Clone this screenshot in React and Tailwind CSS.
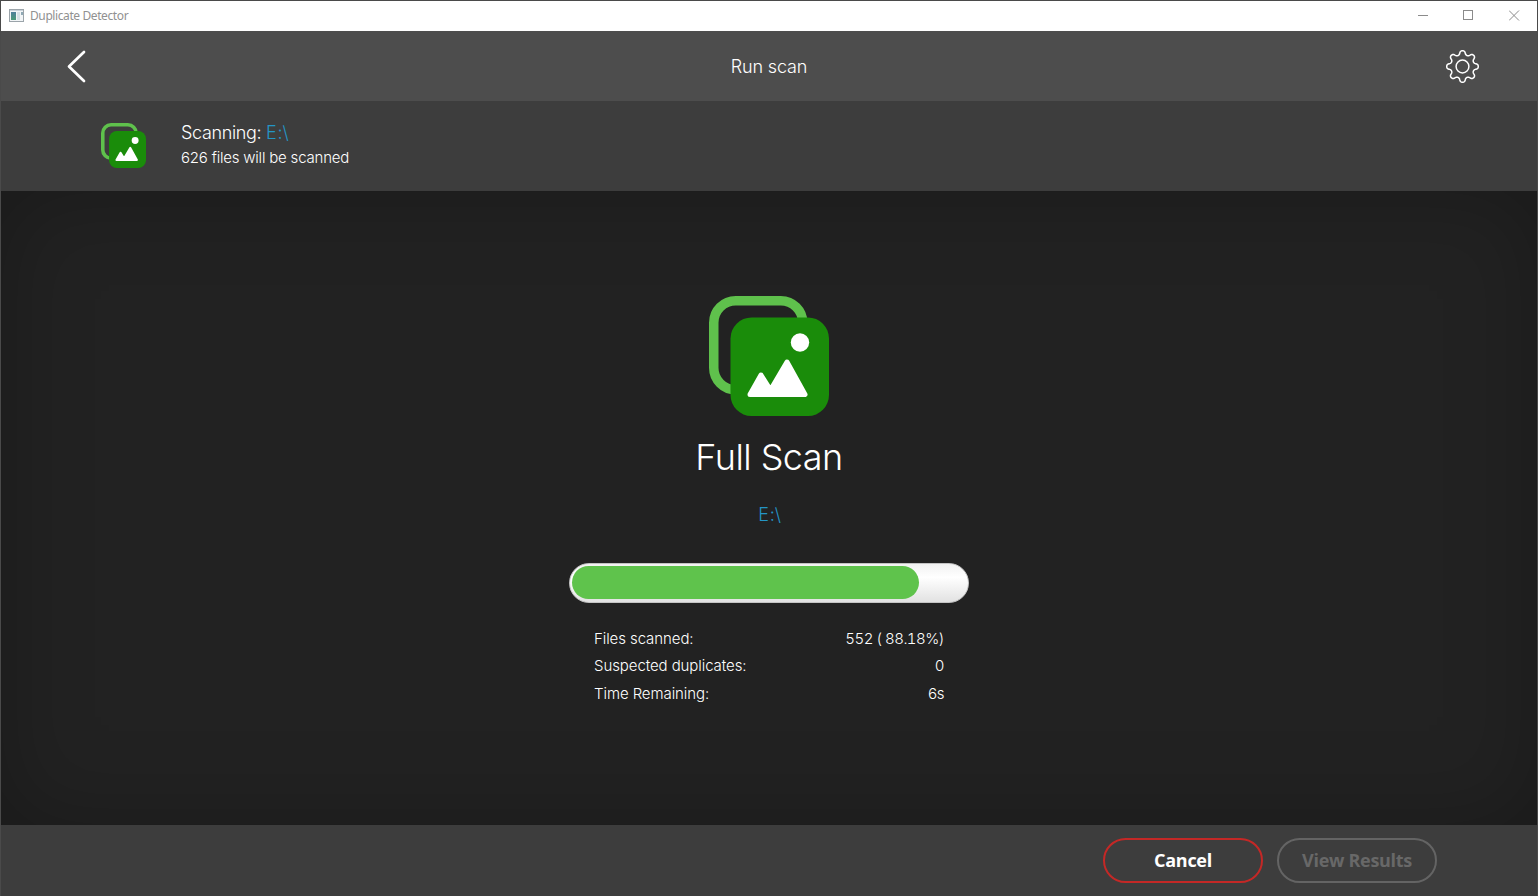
import React from 'react';

// Closed outline of the eight-lobed gear, centred on the origin.
const gearOutline =
  Array.from({ length: 160 }, (_, i) => {
    const t = (i / 160) * Math.PI * 2;
    const a = t + 0.03 * Math.sin(16 * t);
    const r = 13.8 + 2 * Math.cos(8 * t);
    return `${i ? 'L' : 'M'}${(r * Math.sin(a)).toFixed(2)} ${(-r * Math.cos(a)).toFixed(2)}`;
  }).join('') + 'Z';

function GearIcon() {
  return (
    <svg className="h-[34px] w-[34px]" viewBox="-16.5 -17.5 34 34" fill="none" stroke="#fff" strokeWidth="1.5" strokeLinejoin="round">
      <path d={gearOutline} />
      <circle r="6.4" />
    </svg>
  );
}

function PhotosIcon({ className }) {
  return (
    <svg className={className} viewBox="0 0 120 120">
      <rect x="4.75" y="4.75" width="89" height="89" rx="22" fill="none" stroke="#5fc14c" strokeWidth="9.5" />
      <rect x="21.5" y="21.5" width="98.5" height="98.5" rx="21" fill="#1a8c0a" />
      <circle cx="91" cy="46.5" r="9.2" fill="#fff" />
      <path d="M41 98.5 52 79 61.5 94 78 66 96 98.5Z" fill="#fff" stroke="#fff" strokeWidth="5" strokeLinejoin="round" />
    </svg>
  );
}

function TitleBar() {
  return (
    <div className="flex h-[30px] shrink-0 items-center bg-white pl-2">
      <svg className="mb-[2px] h-[13px] w-[15px]" viewBox="0 0 15 13">
        <defs>
          <linearGradient id="pane" x1="0" y1="0" x2="0" y2="1">
            <stop offset="0" stopColor="#4f7f9c" />
            <stop offset="1" stopColor="#4b9a78" />
          </linearGradient>
        </defs>
        <rect x="0.5" y="0.5" width="14" height="12" fill="#f2f5f7" stroke="#9ba4aa" />
        <path d="M1 1.5H14" stroke="#c9d2da" />
        <rect x="2" y="3" width="5" height="8" fill="url(#pane)" />
        <rect x="8" y="3" width="3" height="8" fill="#d5e0e5" />
        <rect x="12" y="3" width="2" height="3" fill="#8fa9b5" />
      </svg>
      <span className="ml-[6px] font-['Noto_Sans',sans-serif] text-[12px] font-normal tracking-[-0.4px] text-[#919191]">Duplicate Detector</span>
      <div className="ml-auto flex items-center pr-[17px] pb-px text-[#8b8b8b]">
        <svg className="h-[11px] w-[11px]" viewBox="0 0 11 11"><path d="M0 5.5H10" stroke="currentColor" /></svg>
        <svg className="ml-[34px] h-[11px] w-[11px]" viewBox="0 0 11 11"><rect x="0.5" y="0.5" width="9" height="9" fill="none" stroke="currentColor" /></svg>
        <svg className="ml-[35px] h-[11px] w-[11px]" viewBox="0 0 11 11"><path d="M0 0.5 10 10.5M10 0.5 0 10.5" stroke="currentColor" /></svg>
      </div>
    </div>
  );
}

function Stat({ label, value }) {
  return (
    <div className="flex h-[27.5px] items-center justify-between">
      <span className="tracking-[-0.08px]">{label}</span>
      <span className="tracking-[-0.55px] tabular-nums">{value}</span>
    </div>
  );
}

export default function App() {
  return (
    <div className="flex h-screen w-full flex-col overflow-hidden border-x border-t border-[#4a4a4a] bg-[#3d3d3d] font-['Inter','Liberation_Sans',sans-serif] font-light text-white">
      <TitleBar />
      <header className="grid h-[70px] shrink-0 grid-cols-3 items-center bg-[#4d4d4d] pr-[57px] pl-[65px]">
        <svg className="h-[34px] w-[21px]" viewBox="0 0 21 34" fill="none" stroke="#fff" strokeWidth="2.7" strokeLinecap="round" strokeLinejoin="round">
          <path d="M18 3 3 17.5 18 32" />
        </svg>
        <h1 className="mt-[2px] pr-[8px] text-center text-[18px] leading-6 tracking-[-0.15px] whitespace-nowrap">Run scan</h1>
        <div className="flex justify-end"><GearIcon /></div>
      </header>
      <section className="flex h-[90px] shrink-0 items-center bg-[#3d3d3d] pb-[2px] pl-[100px]">
        <PhotosIcon className="h-[45px] w-[45px]" />
        <div className="ml-[35px] pb-[1px]">
          <p className="text-[18px] leading-[26px] tracking-[-0.35px] whitespace-nowrap">Scanning: <span className="tracking-[0.9px] text-[#2495c5]">E:\</span></p>
          <p className="text-[15px] leading-6 tracking-[-0.2px] whitespace-nowrap">626 files will be scanned</p>
        </div>
      </section>
      <main className="flex min-h-0 flex-1 flex-col items-center bg-[#222222] pt-[105px] shadow-[inset_0_0_90px_rgba(0,0,0,0.25)]">
        <PhotosIcon className="h-[120px] w-[120px] shrink-0" />
        <h2 className="mt-[17px] text-[36px] leading-[48px] font-light tracking-[-0.55px] whitespace-nowrap">Full Scan</h2>
        <p className="mt-[22px] pl-[2px] text-[18px] leading-6 tracking-[0.9px] text-[#2495c5]">E:\</p>
        <div className="mt-9 h-10 w-[400px] shrink-0 rounded-[20px] border border-[#c4c4c4] bg-linear-to-b from-[#f2f2f2] via-white via-35% to-[#e2e2e2] p-[2px]">
          <div className="h-[33px] w-[347px] rounded-[16.5px] bg-[#5fc34c]" />
        </div>
        <div className="mt-[22px] w-[350px] text-[15px] leading-5">
          <Stat label="Files scanned:" value="552 ( 88.18%)" />
          <Stat label="Suspected duplicates:" value="0" />
          <Stat label="Time Remaining:" value="6s" />
        </div>
      </main>
      <footer className="flex h-[71px] shrink-0 items-center justify-end gap-[14px] bg-[#3d3d3d] pr-[100px] font-['Open_Sans','Noto_Sans',sans-serif] text-[18px] font-bold">
        <button className="h-[45px] w-[160px] rounded-[22.5px] border-2 border-[#c42826] tracking-[-0.3px] text-white">Cancel</button>
        <button className="h-[45px] w-[160px] rounded-[22.5px] border-2 border-[#646464] tracking-[-0.3px] text-[#686868]">View Results</button>
      </footer>
    </div>
  );
}
